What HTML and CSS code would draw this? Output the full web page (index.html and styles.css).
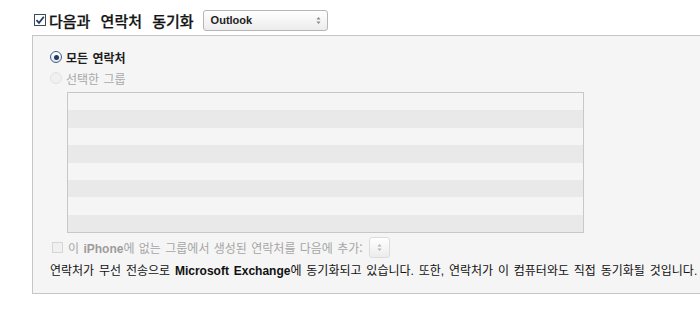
FILE: index.html
```html
<!DOCTYPE html>
<html lang="ko">
<head>
    <meta charset="UTF-8">
    <title>연락처 동기화</title>
    <link rel="stylesheet" href="styles.css">
</head>
<body>
    <div class="sync-header">
        <label class="sync-toggle">
            <span class="check checked">
                <svg width="10" height="10" viewBox="0 0 10 10"><path d="M1.5 5.2 L4 7.8 L8.8 1.8" fill="none" stroke="#1f3f6a" stroke-width="1.8"/></svg>
            </span>
            <span class="title">다음과 연락처 동기화</span>
        </label>
        <div class="select">
            <span class="select-value">Outlook</span>
            <span class="arrows">
                <svg width="5" height="9" viewBox="0 0 5 9"><path d="M0.5 3.5 L2.5 1 L4.5 3.5 Z M0.5 5.5 L2.5 8 L4.5 5.5 Z" fill="#888"/></svg>
            </span>
        </div>
    </div>

    <div class="panel">
        <div class="radio-row">
            <span class="radio on"><span class="dot"></span></span>
            <span class="radio-label">모든 연락처</span>
        </div>
        <div class="radio-row disabled">
            <span class="radio"></span>
            <span class="radio-label">선택한 그룹</span>
        </div>

        <div class="group-list">
            <div class="row"></div>
            <div class="row alt"></div>
            <div class="row"></div>
            <div class="row alt"></div>
            <div class="row"></div>
            <div class="row alt"></div>
            <div class="row"></div>
            <div class="row alt"></div>
        </div>

        <div class="add-row">
            <span class="check disabled"></span>
            <span class="add-label">이 <b>iPhone</b>에 없는 그룹에서 생성된 연락처를 다음에 추가:</span>
            <div class="select small">
                <span class="arrows">
                    <svg width="5" height="9" viewBox="0 0 5 9"><path d="M0.5 3.5 L2.5 1 L4.5 3.5 Z M0.5 5.5 L2.5 8 L4.5 5.5 Z" fill="#b4b4b4"/></svg>
                </span>
            </div>
        </div>

        <p class="note">연락처가 무선 전송으로 <b>Microsoft Exchange</b>에 동기화되고 있습니다. 또한, 연락처가 이 컴퓨터와도 직접 동기화될 것입니다.</p>
    </div>
</body>
</html>
```

FILE: styles.css
```css
body {
    margin: 0;
    background: #fff;
    font-family: "Liberation Sans", "Noto Sans CJK KR", sans-serif;
    color: #222;
}

.sync-header {
    display: flex;
    align-items: center;
    gap: 9px;
    padding: 9px 0 0 34px;
    height: 22px;
}

.sync-toggle {
    display: flex;
    align-items: center;
    gap: 3px;
}

.check {
    width: 12px;
    height: 12px;
    border: 1px solid #8a8a8a;
    background: #fff;
    display: flex;
    align-items: center;
    justify-content: center;
    box-sizing: border-box;
}

.check.checked {
    border-color: #3a4a60;
}

.check.disabled {
    width: 11px;
    height: 11px;
    border-color: #d6d6d6;
    background: #f0f0f0;
}

.title {
    font-family: "Noto Sans CJK KR", sans-serif;
    font-size: 15px;
    font-weight: 500;
    color: #141414;
    word-spacing: 6px;
    -webkit-text-stroke: 0.25px #141414;
}

.select {
    width: 125px;
    height: 21px;
    border: 1px solid #b6b6b6;
    border-radius: 3px;
    background: linear-gradient(#ffffff, #ececec);
    box-sizing: border-box;
    display: flex;
    align-items: center;
    justify-content: space-between;
    padding: 0 6px 0 7px;
}

.select-value {
    font-family: "Liberation Sans", sans-serif;
    font-weight: bold;
    font-size: 11px;
    color: #222;
}

.arrows {
    display: flex;
    align-items: center;
}

.select.small {
    width: 21px;
    height: 21px;
    padding: 0;
    justify-content: center;
    border-color: #dcdcdc;
    margin-left: 6px;
}

.panel {
    margin: 4px 0 0 32px;
    background: #f5f5f5;
    border: 1px solid #c6c6c6;
    border-right: none;
    padding: 11px 0 14px 17px;
    height: 259px;
    box-sizing: border-box;
}

.radio-row {
    display: flex;
    align-items: center;
    gap: 4px;
    height: 20px;
    margin-bottom: 1px;
}

.radio {
    width: 12px;
    height: 12px;
    border-radius: 50%;
    border: 1px solid #8c8c8c;
    background: linear-gradient(#ffffff, #e6e6e6);
    box-sizing: border-box;
    display: flex;
    align-items: center;
    justify-content: center;
}

.radio.on {
    border-color: #3c5f8c;
}

.dot {
    width: 5px;
    height: 5px;
    border-radius: 50%;
    background: #1d3d66;
}

.radio-row.disabled .radio {
    border-color: #e2e2e2;
    background: #f0f0f0;
}

.radio-label {
    font-family: "Noto Sans CJK KR", sans-serif;
    font-size: 12px;
    font-weight: bold;
    color: #1e1e1e;
    word-spacing: 1px;
}

.radio-row.disabled .radio-label {
    font-weight: normal;
    color: #a8a8a8;
}

.group-list {
    margin: 4px 0 0 17px;
    width: 515px;
    border: 1px solid #c8c8c8;
    background: #f5f5f5;
}

.row {
    height: 17.4px;
}

.row.alt {
    background: #e9e9e9;
}

.add-row {
    display: flex;
    align-items: center;
    margin: 3px 0 0 2px;
    height: 22px;
}

.add-row .check {
    margin-right: 5px;
}

.add-label {
    font-family: "Noto Sans CJK KR", sans-serif;
    font-size: 12px;
    color: #a6a6a6;
    word-spacing: 1px;
}

.add-label b {
    font-family: "Liberation Sans", sans-serif;
    color: #9c9c9c;
}

.note {
    margin: 3px 0 0 0;
    font-size: 12px;
    color: #111;
    white-space: nowrap;
    word-spacing: 1.5px;
}

.note b {
    font-family: "Liberation Sans", sans-serif;
}
```
